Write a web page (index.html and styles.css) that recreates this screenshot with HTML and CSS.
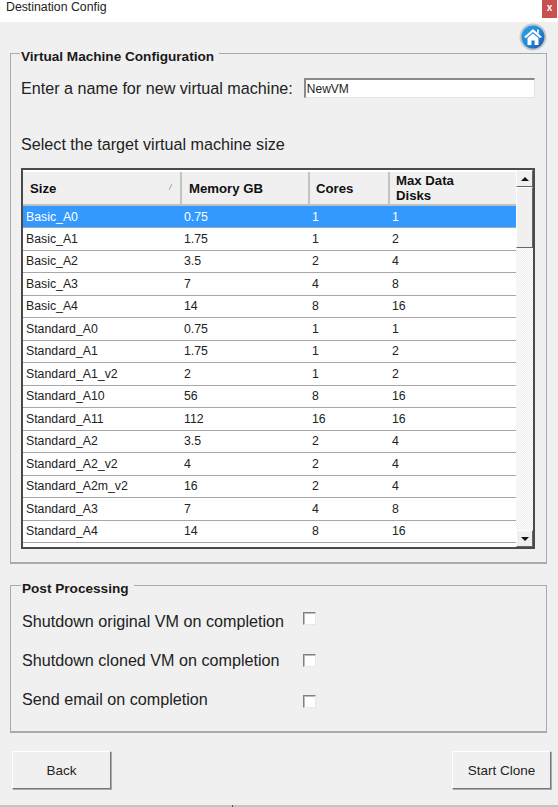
FILE: index.html
```html
<!DOCTYPE html>
<html lang="en">

<head>
    <meta charset="UTF-8">
    <meta name="viewport" content="width=device-width, initial-scale=1.0">
    <title>Destination Config</title>
    <link rel="stylesheet" href="styles.css">
</head>

<body>
    <div class="title-bar">
        <span class="title-text">Destination Config</span>
        <span class="close-btn">x</span>
    </div>

    <div class="window-body">
        <!-- home button sits over the group box corner -->
        <div class="home-btn">
            <svg width="28" height="28" viewBox="0 0 28 28">
                <defs>
                    <linearGradient id="homeBlue" x1="0" y1="0" x2="1" y2="1">
                        <stop offset="0" stop-color="#2aa5e8" />
                        <stop offset="0.55" stop-color="#1f86d6" />
                        <stop offset="1" stop-color="#2c4fa8" />
                    </linearGradient>
                </defs>
                <circle cx="14" cy="14" r="13.5" fill="#c4c8cc" />
                <circle cx="14" cy="14" r="11.5" fill="url(#homeBlue)" />
                <path d="M14 6 L23 14 L21 15 L14 9 L7 15 L5 14 Z" fill="#fff" />
                <path d="M18 6.5 h2 v4.5 l-2 -1.6 Z" fill="#dfe8f2" />
                <path d="M8.5 15 L14 10.4 L19.5 15 V22 H15.6 V17.5 H12.4 V22 H8.5 Z" fill="#fff" />
            </svg>
        </div>

        <fieldset class="group group-vm">
            <legend>Virtual Machine Configuration</legend>

            <div class="name-row">
                <label class="big-label">Enter a name for new virtual machine:</label>
                <input class="name-input" type="text" value="NewVM">
            </div>

            <div class="big-label select-label">Select the target virtual machine size</div>

            <div class="grid-box">
                <div class="grid-main">
                    <table class="vm-table">
                        <colgroup>
                            <col class="col-size">
                            <col class="col-mem">
                            <col class="col-cores">
                            <col class="col-disks">
                        </colgroup>
                        <thead>
                            <tr>
                                <th>Size<span class="sort-mark"></span></th>
                                <th>Memory GB</th>
                                <th>Cores</th>
                                <th class="th-disks">Max Data Disks</th>
                            </tr>
                        </thead>
                        <tbody>
                            <tr class="selected"><td>Basic_A0</td><td>0.75</td><td>1</td><td>1</td></tr>
                            <tr><td>Basic_A1</td><td>1.75</td><td>1</td><td>2</td></tr>
                            <tr><td>Basic_A2</td><td>3.5</td><td>2</td><td>4</td></tr>
                            <tr><td>Basic_A3</td><td>7</td><td>4</td><td>8</td></tr>
                            <tr><td>Basic_A4</td><td>14</td><td>8</td><td>16</td></tr>
                            <tr><td>Standard_A0</td><td>0.75</td><td>1</td><td>1</td></tr>
                            <tr><td>Standard_A1</td><td>1.75</td><td>1</td><td>2</td></tr>
                            <tr><td>Standard_A1_v2</td><td>2</td><td>1</td><td>2</td></tr>
                            <tr><td>Standard_A10</td><td>56</td><td>8</td><td>16</td></tr>
                            <tr><td>Standard_A11</td><td>112</td><td>16</td><td>16</td></tr>
                            <tr><td>Standard_A2</td><td>3.5</td><td>2</td><td>4</td></tr>
                            <tr><td>Standard_A2_v2</td><td>4</td><td>2</td><td>4</td></tr>
                            <tr><td>Standard_A2m_v2</td><td>16</td><td>2</td><td>4</td></tr>
                            <tr><td>Standard_A3</td><td>7</td><td>4</td><td>8</td></tr>
                            <tr><td>Standard_A4</td><td>14</td><td>8</td><td>16</td></tr>
                        </tbody>
                    </table>
                </div>
                <div class="scrollbar">
                    <div class="scroll-btn"><span class="arrow-up"></span></div>
                    <div class="scroll-thumb"></div>
                    <div class="scroll-track"></div>
                    <div class="scroll-btn"><span class="arrow-down"></span></div>
                </div>
            </div>
        </fieldset>

        <fieldset class="group group-post">
            <legend>Post Processing</legend>
            <div class="check-row">
                <span class="big-label check-label">Shutdown original VM on completion</span>
                <span class="check-box"></span>
            </div>
            <div class="check-row">
                <span class="big-label check-label">Shutdown cloned VM on completion</span>
                <span class="check-box"></span>
            </div>
            <div class="check-row">
                <span class="big-label check-label">Send email on completion</span>
                <span class="check-box"></span>
            </div>
        </fieldset>

        <div class="button-row">
            <button class="win-btn" type="button">Back</button>
            <button class="win-btn" type="button">Start Clone</button>
        </div>
    </div>
</body>

</html>
```

FILE: styles.css
```css
* {
    margin: 0;
    padding: 0;
    box-sizing: border-box;
}

html,
body {
    height: 807px;
    overflow: hidden;
}

body {
    font-family: "Liberation Sans", Arial, sans-serif;
    background: #f0f0f0;
    color: #222;
}

/* title bar */
.title-bar {
    height: 22px;
    background: #fff;
    display: flex;
    justify-content: space-between;
    align-items: flex-start;
    padding-left: 6px;
    padding-right: 1px;
}

.title-text {
    font-size: 12.3px;
    line-height: 14px;
    color: #222;
}

.close-btn {
    width: 15px;
    height: 18px;
    background: #c75050;
    color: #fff;
    font-size: 10px;
    font-weight: bold;
    line-height: 15px;
    text-align: center;
}

.window-body {
    position: relative;
    height: 785px;
    padding: 22px 11px 0 10px;
    border-bottom: 2px solid #c4c4c4;
}

/* small notch in the bottom edge */
.window-body::after {
    content: "";
    position: absolute;
    left: 232px;
    bottom: -2px;
    width: 1px;
    height: 2px;
    background: #555;
}

.home-btn {
    position: absolute;
    top: 1px;
    right: 11px;
    width: 28px;
    height: 28px;
}

/* group boxes */
.group {
    border: 1px solid #aaa;
    border-bottom-width: 2px;
    padding: 0 11px;
    min-width: 0;
}

.group legend {
    margin-left: -1px;
    padding: 6px 5px 0 1px;
    font-size: 13.6px;
    font-weight: bold;
    line-height: 13px;
    color: #1a1a1a;
}

.group-vm {
    height: 520px;
    padding-left: 10px;
}

.group-post {
    height: 157px;
    margin-top: 12px;
}

.big-label {
    font-size: 16.15px;
    line-height: 20px;
    white-space: nowrap;
}

.name-row {
    display: flex;
    align-items: center;
    margin-top: 13px;
    height: 24px;
}

.name-input {
    margin-left: 11px;
    width: 231px;
    height: 20px;
    border: 1px solid #e4e4e4;
    border-top: 2px solid #8a8a8a;
    border-left: 2px solid #8a8a8a;
    background: #fff;
    font-family: "Liberation Sans", Arial, sans-serif;
    font-size: 12px;
    padding-left: 1px;
    color: #222;
    outline: none;
}

.select-label {
    margin-top: 34px;
}

/* data grid */
.grid-box {
    display: flex;
    width: 514px;
    height: 381px;
    margin-top: 14px;
    border: 2px solid #4a4a4a;
    background: #fff;
    overflow: hidden;
}

.grid-main {
    flex: 1;
    min-width: 0;
    padding-top: 2px;
}

.vm-table {
    border-collapse: collapse;
    table-layout: fixed;
    width: 100%;
    font-size: 12.3px;
    color: #222;
}

.col-size {
    width: 158px;
}

.col-mem {
    width: 128px;
}

.col-cores {
    width: 80px;
}

.vm-table th {
    position: relative;
    height: 33px;
    background: #f0f0f0;
    border-bottom: 2px solid #c0c0c0;
    border-right: 2px solid #c4c4c4;
    font-size: 13.2px;
    line-height: 15px;
    color: #111;
    text-align: left;
    padding-left: 7px;
}

.vm-table th:nth-child(n+3) {
    padding-left: 6px;
}

.vm-table th:last-child {
    border-right: 0;
}

.th-disks {
    padding-right: 45px;
}

/* faint sort indicator in the first header */
.sort-mark {
    position: absolute;
    right: 9px;
    top: 12px;
    width: 1px;
    height: 6px;
    background: #aaa;
    transform: rotate(28deg);
}

.vm-table td {
    height: 22.5px;
    padding: 0 0 0 3px;
    border-bottom: 1px solid #a8a8a8;
    line-height: 14px;
    white-space: nowrap;
}

.selected td {
    background: #3399ff;
    color: #fff;
    border-bottom-color: #9ab;
}

/* scrollbar */
.scrollbar {
    width: 17px;
    display: flex;
    flex-direction: column;
    background: #f0f0f0;
}

.scroll-btn {
    height: 17px;
    flex-shrink: 0;
    background: #f0f0f0;
    border: 1px solid;
    border-color: #fff #666 #666 #fff;
    display: flex;
    align-items: center;
    justify-content: center;
}

.arrow-up {
    border-left: 4px solid transparent;
    border-right: 4px solid transparent;
    border-bottom: 4px solid #111;
}

.arrow-down {
    border-left: 4px solid transparent;
    border-right: 4px solid transparent;
    border-top: 4px solid #111;
}

.scroll-thumb {
    height: 61px;
    flex-shrink: 0;
    background: #f0f0f0;
    border: 1px solid;
    border-color: #fff #666 #666 #fff;
}

.scroll-track {
    flex: 1;
    background: repeating-conic-gradient(#ececec 0 25%, #fff 0 50%) 0 0 / 2px 2px;
}

/* post processing rows */
.check-row {
    display: flex;
    align-items: center;
    height: 39px;
}

.check-row:first-of-type {
    margin-top: 6px;
}

.check-label {
    width: 281px;
}

.check-box {
    width: 13px;
    height: 13px;
    margin-top: -4px;
    background: #fff;
    border: 1px solid;
    border-color: #808080 #e8e8e8 #e8e8e8 #808080;
    box-shadow: inset 1px 1px 0 #bbb;
}

/* the boxes drift from the labels down the column */
.check-row:nth-of-type(2) .check-box {
    margin-top: 1px;
}

.check-row:nth-of-type(3) .check-box {
    margin-top: 5px;
}

/* bottom buttons */
.button-row {
    display: flex;
    justify-content: space-between;
    margin: 18px -4px 0 2px;
}

.win-btn {
    width: 99px;
    height: 38px;
    background: #f0f0f0;
    border: 1px solid;
    border-color: #fff #777 #777 #fff;
    box-shadow: 1px 1px 0 #aaa;
    font-family: "Liberation Sans", Arial, sans-serif;
    font-size: 13.5px;
    color: #222;
}
```
